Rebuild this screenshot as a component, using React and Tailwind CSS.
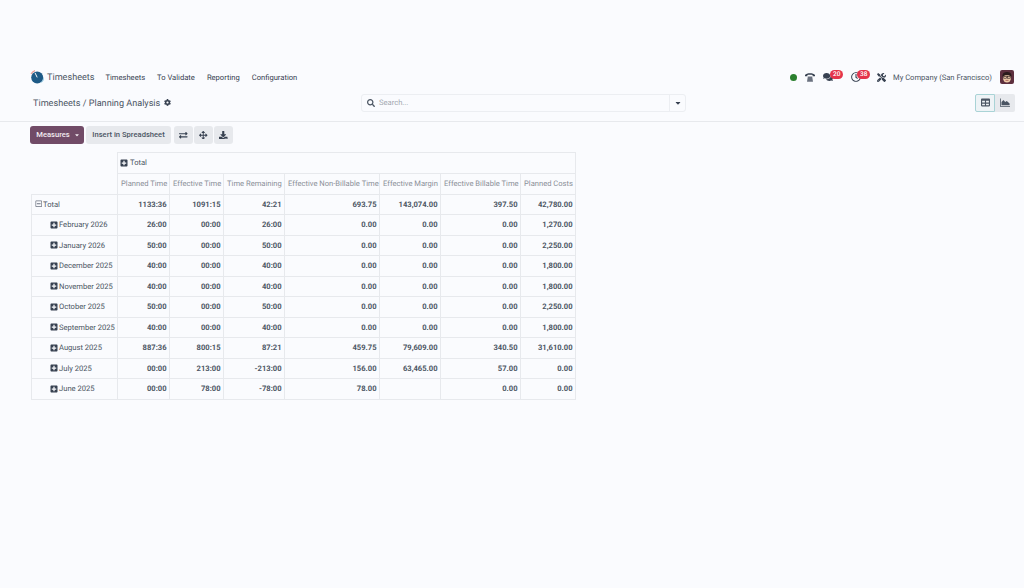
import React from 'react';
import {
  FaComments, FaTools, FaSearch, FaCog, FaCaretDown, FaTable,
  FaExchangeAlt, FaArrowsAlt, FaDownload, FaPlusSquare, FaRegMinusSquare, FaRegClock,
} from 'react-icons/fa';

const measures = ['Planned Time', 'Effective Time', 'Time Remaining', 'Effective Non-Billable Time', 'Effective Margin', 'Effective Billable Time', 'Planned Costs'];
const widths = ['w-[86px]', 'w-[52px]', 'w-[54px]', 'w-[61px]', 'w-[95px]', 'w-[61px]', 'w-[80px]', 'w-[55px]'];

const rows = [
  ['February 2026', '26:00', '00:00', '26:00', '0.00', '0.00', '0.00', '1,270.00'],
  ['January 2026', '50:00', '00:00', '50:00', '0.00', '0.00', '0.00', '2,250.00'],
  ['December 2025', '40:00', '00:00', '40:00', '0.00', '0.00', '0.00', '1,800.00'],
  ['November 2025', '40:00', '00:00', '40:00', '0.00', '0.00', '0.00', '1,800.00'],
  ['October 2025', '50:00', '00:00', '50:00', '0.00', '0.00', '0.00', '2,250.00'],
  ['September 2025', '40:00', '00:00', '40:00', '0.00', '0.00', '0.00', '1,800.00'],
  ['August 2025', '887:36', '800:15', '87:21', '459.75', '79,609.00', '340.50', '31,610.00'],
  ['July 2025', '00:00', '213:00', '-213:00', '156.00', '63,465.00', '57.00', '0.00'],
  ['June 2025', '00:00', '78:00', '-78:00', '78.00', '', '0.00', '0.00'],
];

function Badge({ children, className }) {
  return (
    <span className={`absolute -top-[2px] h-[9px] px-[3px] rounded-full bg-[#e4344b] text-white text-[6.5px] leading-[9px] font-medium ${className}`}>
      {children}
    </span>
  );
}

function Logo() {
  return (
    <svg width="14" height="14" viewBox="0 0 14 14">
      <circle cx="7.200" cy="7.400" r="6" fill="#1d5a86" />
      <path d="M1 4A6.800 6.800 0 0 1 5 .6" stroke="#e8a09a" strokeWidth="1.200" fill="none" />
      <path d="M7.200 7.400 5 2.800" stroke="#f5f7fa" strokeWidth="1" />
      <path d="M11.500 12.500A6.800 6.800 0 0 0 13.800 8" stroke="#7fc4e0" strokeWidth=".8" fill="none" />
    </svg>
  );
}

function DeskPhone() {
  return (
    <svg width="10" height="10" viewBox="0 0 10 10" fill="#374151">
      <path d="M0 3C1.500 .6 8.500 .6 10 3V4.200H7.600V3C6.400 2.600 3.600 2.600 2.400 3V4.200H0Z" />
      <path d="M2.800 4.600H7.200L8 9.800H2Z" fill="#6b7280" />
    </svg>
  );
}

function AreaChart() {
  return (
    <svg width="10" height="9" viewBox="0 0 10 9" fill="#4b5563">
      <path d="M0 0.5H.8V8H10V8.800H0Z" />
      <path d="M1.500 7.200V4L3.500 2 5.200 4 6.800 3 9.600 5.400V7.200Z" />
    </svg>
  );
}

function Avatar() {
  return (
    <svg width="14" height="14" viewBox="0 0 14 14" className="rounded-[2px]">
      <rect width="14" height="14" fill="#5d2f3e" />
      <ellipse cx="7" cy="8" rx="4" ry="4.600" fill="#ecc9a8" />
      <path d="M2.500 7C2 2.500 5 2 7 2s5 .5 4.500 5C10 4.500 4 4.500 2.500 7Z" fill="#2b1b1b" />
      <rect x="3.800" y="6.400" width="2.600" height="1.800" fill="none" stroke="#2b1b1b" strokeWidth=".6" />
      <rect x="7.600" y="6.400" width="2.600" height="1.800" fill="none" stroke="#2b1b1b" strokeWidth=".6" />
      <path d="M5.500 10.400h3" stroke="#a5584f" strokeWidth=".8" />
    </svg>
  );
}

function IconButton({ children }) {
  return (
    <button className="h-[18px] w-[19px] flex items-center justify-center rounded-[3px] bg-[#e7e9ed] text-[#374151] text-[8.500px]">
      {children}
    </button>
  );
}

export default function App() {
  const th = 'border border-[#e7e9ed] font-normal text-[#8a8f98] px-[3px] text-right whitespace-nowrap';
  const td = 'border border-[#e7e9ed] font-bold text-[#4b5563] pl-[3px] pr-[2.500px] text-right whitespace-nowrap';

  return (
    <div className="min-h-[588px] bg-[#fafbfe] pt-[68px] font-['Roboto',sans-serif] text-[#4b5563] text-[7.600px] overflow-hidden [text-rendering:geometricPrecision]">
      {/* Navbar */}
      <div className="h-[18px] flex items-center pl-[30px] pr-[10px]">
        <Logo />
        <span className="ml-[3px] pt-[4px] text-[9.100px] text-[#4b5563]">Timesheets</span>
        <div className="ml-[11px] pt-[1px] flex gap-[12px] text-[#374151]">
          <span>Timesheets</span>
          <span>To Validate</span>
          <span>Reporting</span>
          <span>Configuration</span>
        </div>
        <div className="ml-auto flex items-center text-[#374151]">
          <span className="w-[7px] h-[7px] rounded-full bg-[#2a7f2e]" />
          <span className="ml-[8px] flex"><DeskPhone /></span>
          <span className="relative ml-[8px] w-[20px] flex">
            <FaComments className="text-[10px]" />
            <Badge className="left-[7px]">20</Badge>
          </span>
          <span className="relative ml-[8px] w-[19px] flex">
            <FaRegClock className="text-[10px]" />
            <Badge className="left-[6px]">38</Badge>
          </span>
          <FaTools className="ml-[7px] text-[9px]" />
          <span className="ml-[7px] pt-[1px] text-[#4b5563]">My Company (San Francisco)</span>
          <span className="ml-[8px] flex"><Avatar /></span>
        </div>
      </div>

      {/* Control panel */}
      <div className="mt-[4px] h-[32px] pb-[6px] pl-[33px] pr-[9px] flex items-center border-b border-[#e7e9ed]">
        <div className="w-[328px] flex items-center gap-[4px] text-[9.100px]">
          <span className="pt-[5px]">Timesheets / Planning Analysis</span>
          <FaCog className="mt-[1px] text-[7px] text-[#374151]" />
        </div>
        <div className="h-[18px] w-[325px] flex items-center border border-[#eceef2] rounded-[3px]">
          <FaSearch className="ml-[5px] text-[8px] text-[#4b5563]" />
          <span className="ml-[4px] pt-[1px] flex-1 text-[#a3a8b0]">Search...</span>
          <span className="w-[16px] h-full flex items-center justify-center border-l border-[#eceef2]">
            <FaCaretDown className="text-[8px] text-[#374151]" />
          </span>
        </div>
        <div className="ml-auto flex">
          <span className="w-[20px] h-[18px] flex items-center justify-center rounded-l-[2px] border border-[#a9d3d6] bg-[#eef3f6] text-[#4b5563] text-[9px]"><FaTable /></span>
          <span className="w-[20px] h-[18px] flex items-center justify-center rounded-r-[2px] bg-[#e7e9ed]"><AreaChart /></span>
        </div>
      </div>

      {/* Buttons */}
      <div className="mt-[4px] ml-[30px] flex gap-[2px] h-[18px]">
        <button className="h-[18px] w-[54px] pl-[2px] flex items-center justify-center gap-[4px] rounded-[3px] bg-[#714b67] text-[#f3ecf1] font-medium">
          Measures <FaCaretDown className="text-[6px]" />
        </button>
        <button className="h-[18px] w-[85px] rounded-[3px] bg-[#e7e9ed] text-[#4b5563] font-medium">Insert in Spreadsheet</button>
        <div className="flex gap-[1px] ml-[1px]">
          <IconButton><FaExchangeAlt /></IconButton>
          <IconButton><FaArrowsAlt /></IconButton>
          <IconButton><FaDownload /></IconButton>
        </div>
      </div>

      {/* Pivot table */}
      <table className="mt-[8px] ml-[31px] table-fixed border-collapse w-[544px]">
        <colgroup>
          {widths.map((w, i) => <col key={i} className={w} />)}
        </colgroup>
        <thead>
          <tr className="h-[21px]">
            <th />
            <th colSpan={7} className="border border-[#e7e9ed] font-normal text-left px-[2px] text-[#4b5563]">
              <span className="flex items-center gap-[2px]">
                <FaPlusSquare className="text-[8px] text-[#374151]" /> Total
              </span>
            </th>
          </tr>
          <tr className="h-[20.500px]">
            <th />
            {measures.map((m) => <th key={m} className={th}>{m}</th>)}
          </tr>
        </thead>
        <tbody>
          <tr className="h-[20.500px]">
            <td className="border border-[#e7e9ed] px-[2.500px]">
              <span className="flex items-center gap-[1px]">
                <FaRegMinusSquare className="text-[7.500px] text-[#6b7280]" /> Total
              </span>
            </td>
            {['1133:36', '1091:15', '42:21', '693.75', '143,074.00', '397.50', '42,780.00'].map((v, i) => (
              <td key={i} className={td}>{v}</td>
            ))}
          </tr>
          {rows.map(([label, ...vals]) => (
            <tr key={label} className="h-[20.500px]">
              <td className="border border-[#e7e9ed] pl-[18px] whitespace-nowrap">
                <span className="flex items-center gap-[1px]">
                  <FaPlusSquare className="text-[8px] text-[#374151] shrink-0" /> {label}
                </span>
              </td>
              {vals.map((v, i) => <td key={i} className={td}>{v}</td>)}
            </tr>
          ))}
        </tbody>
      </table>
    </div>
  );
}
